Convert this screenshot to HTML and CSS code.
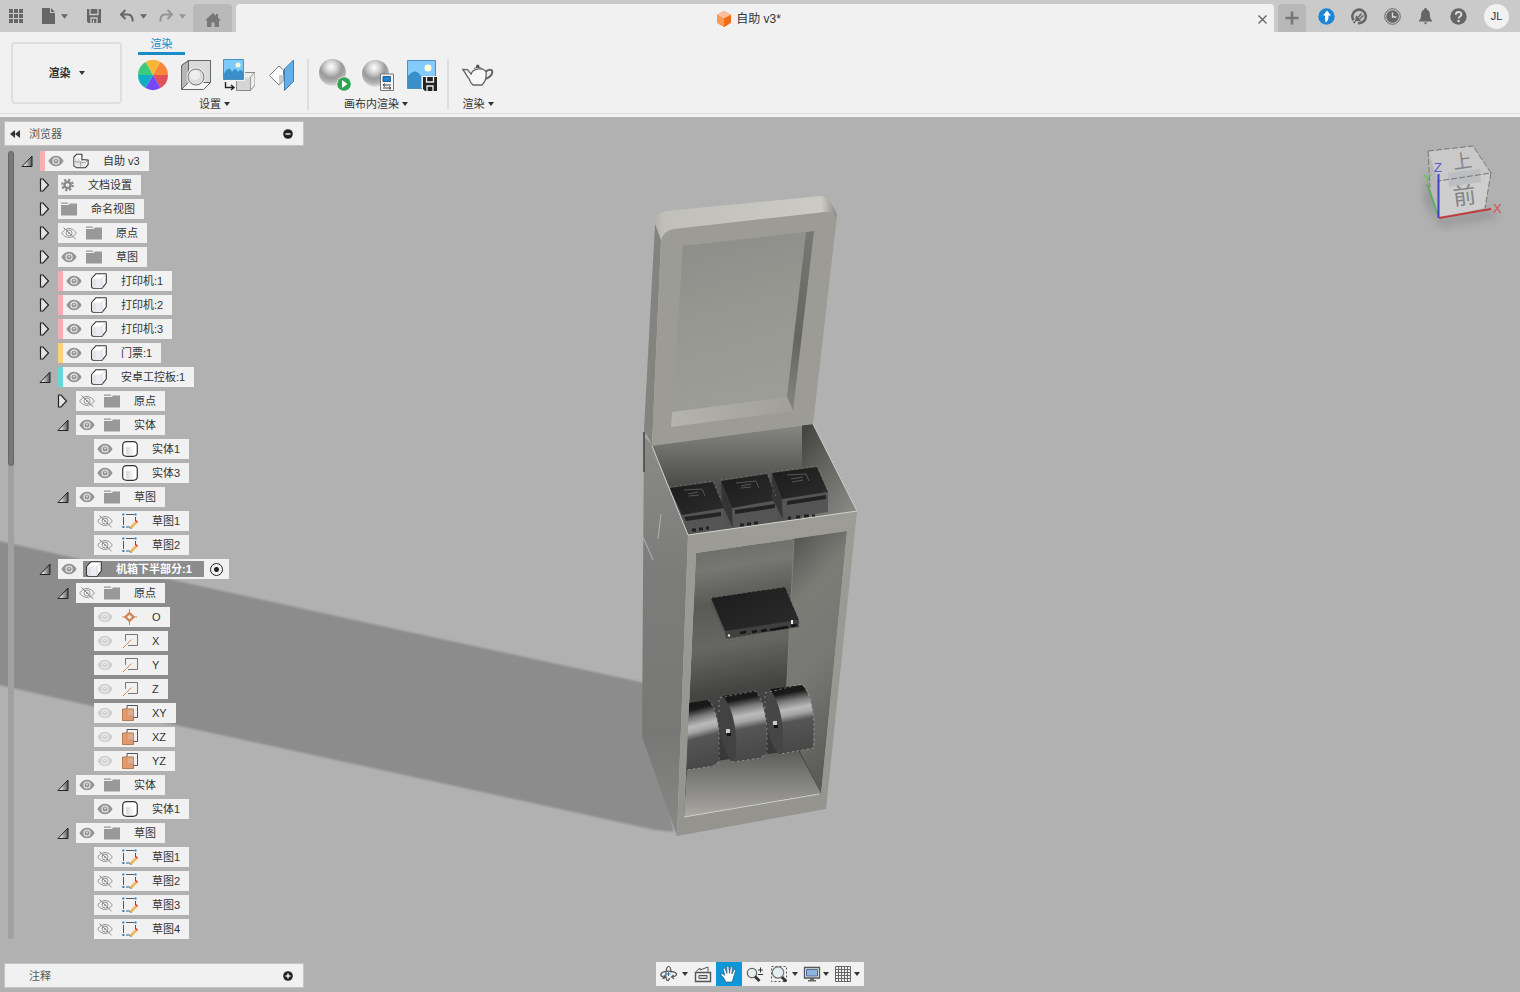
FILE: index.html
```html
<!DOCTYPE html>
<html lang="zh-CN">
<head>
<meta charset="utf-8">
<meta name="viewport" content="width=device-width, initial-scale=1">
<title>自助 v3*</title>
<link rel="stylesheet" href="styles.css">
</head>
<body>
<svg class="defs" aria-hidden="true">
  <defs>
    <linearGradient id="g-tri" x1="0" y1="0" x2="1" y2="0"><stop offset="0.2" stop-color="#eee"/><stop offset="1" stop-color="#555"/></linearGradient>
    <linearGradient id="g-box" x1="0" y1="0" x2="1" y2="0"><stop offset="0" stop-color="#d5d7dd"/><stop offset="1" stop-color="#fff"/></linearGradient>
    <radialGradient id="g-ball" cx="0.45" cy="0.28" r="0.75"><stop offset="0" stop-color="#fff"/><stop offset="0.25" stop-color="#d8d8d8"/><stop offset="0.55" stop-color="#9a9a9a"/><stop offset="0.75" stop-color="#b0b0b0"/><stop offset="1" stop-color="#e8e8e8"/></radialGradient>
  </defs>
  <symbol id="open" viewBox="0 0 12 14"><path d="M1 12.500H11V2z" fill="url(#g-tri)" stroke="#222"/></symbol>
  <symbol id="closed" viewBox="0 0 12 14"><path d="M1.500 1H4l5.500 6L4 13H1.500z" fill="#e4e4e4" stroke="#222" stroke-width="1.200"/></symbol>
  <symbol id="eye" viewBox="0 0 16 16"><path d="M.4 8C4 1 12 1 15.600 8 12 15 4 15 .4 8z" fill="#949494"/><circle cx="8" cy="8" r="3.600" fill="#f1f1f1"/><circle cx="8" cy="8" r="2.500" fill="#949494"/><circle cx="8" cy="7.600" r="1" fill="#ddd"/></symbol>
  <symbol id="eyeoff" viewBox="0 0 16 16"><path d="M.7 8C4.500 2 11.500 2 15.300 8 11.500 14 4.500 14 .7 8z" fill="none" stroke="#999"/><circle cx="8" cy="8" r="3" fill="none" stroke="#999"/><circle cx="8" cy="8" r="1" fill="#999"/><path d="M2.500 2.500l12 11.500" stroke="#888"/></symbol>
  <symbol id="folder" viewBox="0 0 16 16"><path d="M0 1.500h6.500l1 1.200H0zM0 4h7.500L9 2.500h7v12H0z" fill="#999"/></symbol>
  <symbol id="gear" viewBox="0 0 14 14"><circle cx="7" cy="7" r="5.600" fill="none" stroke="#888" stroke-width="2.400" stroke-dasharray="2.300 2.100"/><circle cx="7" cy="7" r="3.300" fill="none" stroke="#888" stroke-width="2.600"/></symbol>
  <symbol id="comp" viewBox="0 0 16 16"><path d="M.6 5.500L5 .7h10.300V10L11 15.300H2L.6 14z" fill="#fff" stroke="#333" stroke-width="1.100" stroke-linejoin="round"/><path d="M1.300 5.700h9.500v9H2.300l-1-1z" fill="#e2e4e9"/><path d="M5 5.700h5.800v9H5z" fill="#eceef1"/><path d="M11 15V5.600L15 1" fill="none" stroke="#ccc" stroke-width=".8"/></symbol>
  <symbol id="asm" viewBox="0 0 18 17"><path d="M1 4L4 1h6v6h3l4 .5v5L14 16H4l-3-2z" fill="#fff" stroke="#333" stroke-width="1.200" stroke-linejoin="round"/><path d="M1.600 5H8v10H4l-2.400-1.500zM9 10h5v5H9z" fill="#e3e4e8"/><path d="M8.500 10v6M1 9.500h7.500L11 7M8.500 10H14l3-2.500" fill="none" stroke="#888" stroke-width=".8"/></symbol>
  <symbol id="body" viewBox="0 0 16 16"><path d="M.7 4.500C.7 2 2 .7 5 .7h6c3 0 4.300 1.300 4.300 3.800v7c0 2.500-1.300 3.800-4.300 3.800H5c-3 0-4.300-1.300-4.300-3.800z" fill="#fff" stroke="#333" stroke-width="1.200"/><path d="M4 5.500c2 .8 6 .8 8.500 0v7.700c-2 1-6.500 1-8.500 0z" fill="url(#g-box)"/></symbol>
  <symbol id="sketch" viewBox="0 0 16 16"><path d="M4 1.500h8M1.500 4v8M13.500 4v4M4 14h4" stroke="#555" fill="none"/><path d="M.4.500h2v2h-2zM12.500.500h2v2h-2zM.4 13h2v2h-2z" fill="#1c86c7"/><path d="M8 15.500l1-3 4.500-4.500 2 2L11 14.500z" fill="#f6b955"/><path d="M13 8.300L14.500 7 16 8.500l-1 1.600z" fill="#d9534f"/><path d="M8 15.800l.6-1.800 1.400 1.200z" fill="#555"/></symbol>
  <symbol id="origin" viewBox="0 0 16 16"><path d="M7.500 0v16M0 8h15" stroke="#cf8d5f"/><path d="M7.500 4L11.500 8l-4 4-4-4z" fill="#f5e9e0" stroke="#cf8352" stroke-width="2.200"/></symbol>
  <symbol id="axis" viewBox="0 0 16 16"><path d="M3.500 8V1.500h12v11H6" fill="none" stroke="#777"/><path d="M1 15l8.500-8.500" stroke="#d78a5c"/></symbol>
  <symbol id="plane" viewBox="0 0 16 16"><path d="M5 4V.5h10.500v12H12" fill="none" stroke="#555"/><path d="M.5 4h11v11.500H.5z" fill="#e29a6c" stroke="#b9774e"/><path d="M5 4.500h6.500V11H5z" fill="#e2ab8c" stroke="#bd8a6b" stroke-width=".6"/></symbol>
  <symbol id="caret" viewBox="0 0 6 4"><path d="M0 0h6L3 4z" fill="currentColor"/></symbol>
  <symbol id="save" viewBox="0 0 14 14"><path d="M0 0h14v14H1.500L0 12.500z" fill="currentColor"/><path d="M3 0v5.500h8V0M4 14V9h6v5M6.500 14v-3" fill="none" stroke="#cacaca" stroke-width="1.300"/></symbol>
  <symbol id="undo" viewBox="0 0 14 14"><path d="M5.500 1L1 5.500 5.500 10M1.500 5.500H8c3 0 4.700 2 4.700 7" fill="none" stroke="currentColor" stroke-width="2"/></symbol>
</svg>

<header class="topbar">
  <div class="quick">
    <button class="q" aria-label="数据面板"><svg width="14" height="14" viewBox="0 0 14 14"><path d="M0 0h4v4H0zM5 0h4v4H5zM10 0h4v4h-4zM0 5h4v4H0zM5 5h4v4H5zM10 5h4v4h-4zM0 10h4v4H0zM5 10h4v4H5zM10 10h4v4h-4z" fill="#666"/></svg></button>
    <button class="q file" aria-label="文件"><svg width="13" height="16" viewBox="0 0 13 16"><path d="M0 0h8v5h5v11H0zM9 0l4 4H9z" fill="#666"/></svg><svg class="car"><use href="#caret"/></svg></button>
    <button class="q" aria-label="保存"><svg width="14" height="14"><use href="#save"/></svg></button>
    <button class="q undo" aria-label="撤消"><svg width="14" height="14"><use href="#undo"/></svg><svg class="car"><use href="#caret"/></svg></button>
    <button class="q redo" aria-label="重做"><svg width="14" height="14" viewBox="0 0 14 14"><path d="M8.500 1L13 5.500 8.500 10M12.500 5.500H6c-3 0-4.700 2-4.700 7" fill="none" stroke="currentColor" stroke-width="2"/></svg><svg class="car"><use href="#caret"/></svg></button>
  </div>
  <button class="home" aria-label="主页"><svg width="16" height="14" viewBox="0 0 16 14"><path d="M8 0l3 2.700V1h2v3.500L16 7.500h-2V14H9.500V9.500h-3V14H2V7.500H0z" fill="#777"/></svg></button>
  <div class="doc">
    <span class="title"><svg width="14" height="16" viewBox="0 0 14 16"><path d="M7 0l7 3.700v8.100L7 16l-7-4.200V3.700z" fill="#f4863a"/><path d="M7 0l7 3.700-7 3.800L0 3.700z" fill="#fbc09a"/><path d="M7 7.500l7-3.800v8.100L7 16z" fill="#f36b12"/><path d="M0 3.700l7 3.800V16l-7-4.200z" fill="#fa9a58"/></svg>自助 v3*</span>
    <button class="close" aria-label="关闭"><svg width="9" height="9" viewBox="0 0 9 9"><path d="M.5.500l8 8M8.500.500l-8 8" stroke="#666" stroke-width="1.400"/></svg></button>
  </div>
  <button class="plus" aria-label="新建"><svg width="14" height="14" viewBox="0 0 14 14"><path d="M7 .5v13M.5 7h13" stroke="#777" stroke-width="2.600"/></svg></button>
  <div class="status">
    <button aria-label="更新"><svg width="17" height="17" viewBox="0 0 17 17"><circle cx="8.500" cy="8.500" r="8.200" fill="#1f86d4"/><path d="M9 2.500l4 5h-2.500c.2 3-.5 5-2.500 7-1-1-1-4-.8-7H5z" fill="#fff"/></svg></button>
    <button aria-label="扩展"><svg width="17" height="17" viewBox="0 0 17 17"><path d="M2.600 12.200A6.700 6.700 0 1 1 7 15" fill="none" stroke="#666" stroke-width="2.600"/><path d="M5.500 7.500l4.500 4.500c-1.500 1.500-3.500 1.500-4.800.5-1.300-1.500-1.200-3.500.3-5z" fill="#666"/><path d="M2.500 15l3-3M7.500 9l3-3.500M9 10.500l3.500-3" stroke="#666" stroke-width="1.600"/></svg></button>
    <button aria-label="作业状态"><svg width="17" height="17" viewBox="0 0 17 17"><circle cx="8.500" cy="8.500" r="7.800" fill="none" stroke="#666"/><circle cx="8.500" cy="8.500" r="6.300" fill="#666"/><path d="M8.500 4.500V9h4" fill="none" stroke="#ddd" stroke-width="1.400"/></svg></button>
    <button aria-label="通知"><svg width="17" height="17" viewBox="0 0 17 17"><path d="M8.500 0c1 0 1.300.7 1.300 1.600C12.500 2.500 13 5 13 8c0 2.500 1 3.500 2 4.500v1H2v-1C3 11.500 4 10.500 4 8c0-3 .5-5.500 3.200-6.400C7.200.700 7.500 0 8.500 0zM6.500 14.500h4L8.500 16.500z" fill="#666"/></svg></button>
    <button aria-label="帮助"><svg width="17" height="17" viewBox="0 0 17 17"><circle cx="8.500" cy="8.500" r="8.200" fill="#666"/><path d="M5.800 6.800c0-3.800 5.600-3.600 5.600-.4 0 2-2.800 2-2.800 4.200" fill="none" stroke="#ddd" stroke-width="1.900"/><circle cx="8.600" cy="13" r="1.200" fill="#ddd"/></svg></button>
    <button class="avatar" aria-label="账户 JL">JL</button>
  </div>
</header>

<section class="ribbon">
  <button class="workspace">渲染<svg class="car"><use href="#caret"/></svg></button>
  <div class="tools">
    <nav class="tabs"><a href="#render">渲染</a></nav>
    <div class="groups">
      <div class="group">
        <div class="icons">
          <button aria-label="外观"><svg width="32" height="32" viewBox="0 0 32 32"><path d="M16 16L8.500 3A15 15 0 0 1 23.500 3z" fill="#f7b638"/><path d="M16 16L23.500 3A15 15 0 0 1 31 16z" fill="#fb8539"/><path d="M16 16h15a15 15 0 0 1-7.500 13z" fill="#e0525a"/><path d="M16 16l7.500 13a15 15 0 0 1-15 0z" fill="#7547f5"/><path d="M16 16L8.500 29A15 15 0 0 1 1 16z" fill="#10aec6"/><path d="M16 16H1A15 15 0 0 1 8.500 3z" fill="#3bcb7b"/></svg></button>
          <button aria-label="场景设置"><svg width="32" height="32" viewBox="0 0 32 32"><path d="M1.500 6.500L8.500 1.500h22v22l-7 7h-22z" fill="#f5f5f5" stroke="#666"/><path d="M8.500 1.500h22v22h-22z" fill="#dadada" stroke="#666"/><path d="M1.500 6.500l7-5v22l-7 7z" fill="#b5b5b5" stroke="#666"/><circle cx="16" cy="18" r="9.500" fill="#eee"/><circle cx="16" cy="18" r="8" fill="#ddd" stroke="#777"/><circle cx="15" cy="16" r="5" fill="#eee"/></svg></button>
          <button aria-label="贴图"><svg width="32" height="32" viewBox="0 0 32 32"><path d="M13.500 18l4-4.500H32V26l-4.500 5.500h-14z" fill="#eee" stroke="#888"/><path d="M14 18.500h13V31H14z" fill="#d5d5d5"/><path d="M27.500 31V18l4-4.500" fill="none" stroke="#999"/><path d="M0 0h22v22H0z" fill="#f1f1f1"/><path d="M.5.500h20v20H.5z" fill="#7ecbfb" stroke="#4b91bd"/><path d="M1 15c3-6 6-7 8-2 2-4 4-4 6 0 2-3 3-3 5 0v7H1z" fill="#3a8fca"/><circle cx="15" cy="6" r="2.500" fill="#fff6cf"/><path d="M2.500 23v5.500h8M8 26l3 2.500L8 31" fill="none" stroke="#222" stroke-width="1.400"/></svg></button>
          <button aria-label="纹理贴图控制"><svg width="32" height="32" viewBox="0 0 32 32"><path d="M3.500 16.500L13 7l4.500 4v11L13 26z" fill="#fff" stroke="#777"/><path d="M13 16h4.500v5.500L13 26z" fill="#ccc"/><path d="M18.500 10L27.500 1v21.500l-9 9z" fill="#65aee6" stroke="#467da8"/></svg></button>
        </div>
        <button class="menu">设置<svg class="car"><use href="#caret"/></svg></button>
      </div>
      <div class="group">
        <div class="icons">
          <button aria-label="画布内渲染"><svg width="34" height="32" viewBox="0 0 34 32"><circle cx="13.500" cy="13.500" r="13.500" fill="url(#g-ball)"/><circle cx="25" cy="25" r="7.500" fill="#f1f1f1"/><circle cx="25" cy="25" r="6.800" fill="#2fa554"/><path d="M23 21l5.500 4-5.500 4z" fill="#fff"/></svg></button>
          <button aria-label="画布内渲染设置"><svg width="34" height="32" viewBox="0 0 34 32"><circle cx="13.500" cy="14.500" r="13.500" fill="url(#g-ball)"/><path d="M18.500 15h13v16.500h-13z" fill="#f6f6f6" stroke="#777"/><path d="M21 17.500h7.500v5H21z" fill="#2084d0" stroke="#225f91"/><path d="M21 26h8M21 29h8M23 24.500L21 26l2 1.500M27 27.500l2 1.500-2 1.500" stroke="#444" fill="none"/></svg></button>
          <button aria-label="捕获图像"><svg width="32" height="32" viewBox="0 0 32 32"><path d="M1.500 1.500h28v28h-28z" fill="#84cafb" stroke="#4b8fbd"/><path d="M2 17c5-6 9-6 13 0v12H2z" fill="#3b8fc9"/><circle cx="22" cy="9" r="3.500" fill="#fbffd9"/><path d="M16 17h16v15H16z" fill="#f1f1f1"/><g transform="translate(17 18)"><path d="M0 0h14v14H2l-2-2z" fill="#222"/><path d="M3.500 0v5h7V0M4 14V9h6v5" fill="none" stroke="#eee" stroke-width="1.300"/></g></svg></button>
        </div>
        <button class="menu">画布内渲染<svg class="car"><use href="#caret"/></svg></button>
      </div>
      <div class="group">
        <div class="icons">
          <button aria-label="渲染"><svg width="32" height="32" viewBox="0 0 32 32"><path d="M.8 10.500l4.700.2 3.500 4.500C11 9 22 8 24 13c.8 5.500-1 10-4 13H11c-2-2-3.500-4-3.700-6C5 18 4 14.500.8 10.500z" fill="#f7f7f7" stroke="#666" stroke-width="1.300"/><path d="M23.800 13c2-3 6.500-3 6.500 0s-3.500 6-7 7" fill="none" stroke="#666" stroke-width="2"/><path d="M12 9.500c2-1.500 6-1.500 8 0" stroke="#666" fill="none"/><circle cx="15.700" cy="7.300" r="1.700" fill="#555"/></svg></button>
        </div>
        <button class="menu">渲染<svg class="car"><use href="#caret"/></svg></button>
      </div>
    </div>
  </div>
</section>

<main class="viewport">
  <svg class="scene" viewBox="0 117 1520 875" preserveAspectRatio="xMidYMid slice" role="img" aria-label="自助终端模型">
    <defs>
      <filter id="soft" x="-5%" y="-5%" width="110%" height="110%"><feGaussianBlur stdDeviation="1.200"/></filter>
      <filter id="blur"><feGaussianBlur stdDeviation="5"/></filter>
      <linearGradient id="lidtop" x1="0" y1="0" x2="1" y2="0"><stop offset="0" stop-color="#a5a49e"/><stop offset=".1" stop-color="#c0bfb9"/><stop offset=".92" stop-color="#cbcac4"/><stop offset="1" stop-color="#8b8a86"/></linearGradient>
      <linearGradient id="screen" x1="0" y1="0" x2=".2" y2="1"><stop offset="0" stop-color="#8b8c89"/><stop offset=".5" stop-color="#979791"/><stop offset="1" stop-color="#9d9d98"/></linearGradient>
      <linearGradient id="rim" x1="0" y1="0" x2="0" y2="1"><stop offset="0" stop-color="#777773"/><stop offset=".6" stop-color="#656562"/><stop offset="1" stop-color="#858580"/></linearGradient>
      <linearGradient id="ledge" x1="0" y1="0" x2="1" y2="0"><stop offset="0" stop-color="#b4b3ad"/><stop offset="1" stop-color="#a09f9a"/></linearGradient>
      <linearGradient id="side" x1="0" y1="0" x2="0" y2="1"><stop offset="0" stop-color="#8b8b88"/><stop offset=".35" stop-color="#7c7c7a"/><stop offset=".75" stop-color="#777775"/><stop offset="1" stop-color="#898986"/></linearGradient>
      <linearGradient id="backtop" x1="0" y1="0" x2="0" y2="1"><stop offset="0" stop-color="#888884"/><stop offset=".25" stop-color="#6c6c69"/><stop offset=".55" stop-color="#4c4c4a"/><stop offset="1" stop-color="#555"/></linearGradient>
      <linearGradient id="walltop" x1="0" y1="0" x2=".8" y2="1"><stop offset="0" stop-color="#40403e"/><stop offset=".5" stop-color="#666662"/><stop offset="1" stop-color="#888884"/></linearGradient>
      <linearGradient id="back" x1="0" y1="0" x2=".1" y2="1"><stop offset="0" stop-color="#666662"/><stop offset=".15" stop-color="#767672"/><stop offset=".27" stop-color="#5a5a57"/><stop offset=".42" stop-color="#666663"/><stop offset=".58" stop-color="#444442"/><stop offset="1" stop-color="#2d2d2c"/></linearGradient>
      <linearGradient id="wall" x1="0" y1="0" x2=".25" y2="1"><stop offset="0" stop-color="#4c4c49"/><stop offset=".3" stop-color="#7c7c77"/><stop offset=".6" stop-color="#777773"/><stop offset="1" stop-color="#5c5c59"/></linearGradient>
      <linearGradient id="floor" x1="0" y1="0" x2="0" y2="1"><stop offset="0" stop-color="#5b5b58"/><stop offset=".5" stop-color="#83837f"/><stop offset="1" stop-color="#aaa9a4"/></linearGradient>
      <linearGradient id="roll" x1="0" y1="0" x2=".12" y2="1"><stop offset="0" stop-color="#151515"/><stop offset=".16" stop-color="#1a1a1a"/><stop offset=".28" stop-color="#7c7c7c"/><stop offset=".4" stop-color="#bbb"/><stop offset=".48" stop-color="#a5a5a5"/><stop offset=".58" stop-color="#555"/><stop offset="1" stop-color="#484848"/></linearGradient>
      <linearGradient id="frame" x1="0" y1="0" x2="0" y2="1"><stop offset="0" stop-color="#9d9c96"/><stop offset="1" stop-color="#94938d"/></linearGradient>
      <linearGradient id="dark" x1="0" y1="0" x2="1" y2="1"><stop offset="0" stop-color="#1b1b1b"/><stop offset="1" stop-color="#2c2c2c"/></linearGradient>
    </defs>
    <path d="M-10 539L150 575 400 630 645 683 674 832 655 830 400 774 180 726-10 683z" fill="#8c8c8c" filter="url(#soft)"/>

    <path d="M644 428L652 443 688 535 677 836 642 737z" fill="url(#side)"/>
    <path d="M652 445L813 424 857 511 688 535z" fill="url(#backtop)"/>
    <path d="M802 425L813 424 857 511 802 519z" fill="url(#walltop)"/>
    <g>
      <path d="M682 515L724 508V528L690 534z" fill="#555"/><path d="M670 488L713 482 724 508 682 515z" fill="url(#dark)"/><path d="M684 517L721 512V516L686 521z" fill="#242424"/>
      <path d="M721 481L732 508 733 528 722 505z" fill="#353535"/><path d="M732 508L777 500V521L733 528z" fill="#555"/><path d="M721 481L767 474 777 500 732 508z" fill="url(#dark)"/><path d="M735 510L775 504V508L735 514z" fill="#222"/>
      <path d="M772 473L782 499 783 519 772 498z" fill="#353535"/><path d="M782 499L828 492V512L783 519z" fill="#555"/><path d="M772 473L817 467 828 492 782 499z" fill="url(#dark)"/><path d="M787 501L826 495V499L787 505z" fill="#222"/>
      <path d="M692 530h4m3-1h4m3-1h3M740 525h4m3-1h4m3-1h4M788 518h3m5-1h4m4-1h5m3 0h3" stroke="#202020" stroke-width="3"/>
      <path d="M684 490l18-1 3 7M736 483l20-2 3 7M787 475l19-1 3 7M688 494l10-2M689 496l10-1M741 486l10-2M741 488l10-1M791 479l12-2M792 482l11-2" stroke="#555" stroke-width="1" fill="none"/>
      <path d="M670 487L713 481 720 497M721 480L767 473 777 499M772 472L817 466 828 491" fill="none" stroke="#aaa" stroke-width=".6" stroke-dasharray="1 4"/>
    </g>

    <path d="M696 553L847 531 821 793 684 817z" fill="url(#back)"/>
    <path d="M687 765L798 750 821 793 684 817z" fill="url(#floor)"/>
    <path d="M794 538L847 531 821 793 800 752 786 700z" fill="url(#wall)"/>
    <path d="M794 540L786 700" stroke="#858581" stroke-width=".8"/>
    <path d="M711 598L725 631 727 639 711 605z" fill="#555"/>
    <path d="M725 630L799 620V627L726 639z" fill="#404040"/>
    <path d="M711 598L785 587 799 620 725 631z" fill="url(#dark)"/>
    <path d="M711 598L785 587 799 620V627L726 639" fill="none" stroke="#999" stroke-width=".6" stroke-dasharray="1 4"/>
    <path d="M740 633l6-1M752 632l5-1M761 631l6-1M770 630l18-3M791 626l6-1" stroke="#151515" stroke-width="2.500"/>
    <path d="M792 620v4M728 635l2 1" stroke="#eee" stroke-width="2"/>

    <g>
      <path d="M689 703L708 700C714 705 719 723 719 735L718 762 713 766 686 770z" fill="url(#roll)"/>
      <path d="M723 696L755 691C763 698 767 720 767 735L766 753 760 758 733 762C737 740 734 711 723 696z" fill="url(#roll)"/>
      <path d="M722 696C733 705 739 736 735 761L731 761C725 752 719 738 719 714z" fill="#424242"/>
      <path d="M770 689L802 685C810 692 814 713 814 728L813 748 780 754C785 733 781 704 770 689z" fill="url(#roll)"/>
      <path d="M768 690C780 698 786 730 782 754L779 754C772 747 766 732 765 708z" fill="#464646"/>
      <path d="M726 729h4v4h-4zM773 721h4v4h-4z" fill="#ccc"/>
      <path d="M727 733h4v3h-4zM774 725h4v3h-4z" fill="#111"/>
      <path d="M719 712V698L755 691C764 698 767 720 767 735V753L760 758 733 762M765 708V693L802 684C811 692 814 713 814 728V748L780 754M708 700C715 705 719 723 719 735V762L713 766 687 770" fill="none" stroke="#bbb" stroke-width=".6" stroke-dasharray="2 3"/>
    </g>

    <path fill-rule="evenodd" d="M688 535L857 511 826 809 677 836zM696 553L684 817 821 793 847 531z" fill="url(#frame)"/>
    <path d="M684 817L819 794M688 535L857 511 813 424M652 446L688 535" fill="none" stroke="#d2d2cd" stroke-width="1"/>
    <path d="M661 514l-3 25M643 537l10 23" stroke="#aaa" stroke-width="1.200"/>
    <path d="M644 432v40" stroke="#444" stroke-width="1.500"/>

    <path d="M655 224Q656 212 667 211L820 196Q830 196 837 215L834 235 662 250 652 444 645 438z" fill="url(#lidtop)"/>
    <path d="M655 224L661 240 652 444 644 430z" fill="#838380"/>
    <path d="M661 242Q662 231 674 229L825 212Q838 211 836 224L813 424 652 446z" fill="#9c9b95"/>
    <path d="M683 246L806 232 787 397 672 412z" fill="url(#screen)"/>
    <path d="M806 232L814 231 793 411 787 397z" fill="url(#rim)"/>
    <path d="M672 412L787 397 793 411 671 427z" fill="url(#ledge)"/>

    <g>
      <path d="M1428 170L1439 220 1490 211 1500 216 1440 226 1425 200z" fill="#777" opacity=".6" filter="url(#blur)"/>
      <path d="M1428 151L1473 146 1491 173 1438 181z" fill="#c9c9c9"/>
      <path d="M1438 181L1491 173 1485 208 1439 218z" fill="#cecece"/>
      <path d="M1428 151L1438 181 1439 218 1430 187z" fill="#b8b8b8"/>
      <path d="M1448 173L1480 169 1481 182 1449 187z" fill="#bcbfc2"/>
      <path d="M1428 151L1473 146 1491 173 1438 181M1491 173L1485 208M1428 151L1430 187" fill="none" stroke="#777" stroke-width="1" stroke-dasharray="6 2"/>
      <text class="face" x="1453" y="168" transform="rotate(-8 1462 161)">上</text>
      <text class="face front" x="1453" y="204" transform="rotate(-7 1464 197)">前</text>
      <path d="M1439 218L1427 184" stroke="#4cb350" stroke-width="1.500"/>
      <path d="M1438.500 218V174" stroke="#4040c4" stroke-width="2"/>
      <path d="M1439 218L1491 209" stroke="#c13e3e" stroke-width="2"/>
      <text class="ax z" x="1434" y="172">Z</text><text class="ax x" x="1493" y="213">X</text><text class="ax y" x="1423" y="183">Y</text>
    </g>
  </svg>

  <aside class="browser">
    <div class="bar">
      <button class="fold" aria-label="折叠"><svg width="10" height="8" viewBox="0 0 10 8"><path d="M5 0v8L0 4zM10 0v8L5 4z" fill="#333"/></svg></button>
      <span>浏览器</span>
      <button aria-label="最小化"><svg width="10" height="10" viewBox="0 0 10 10"><circle cx="5" cy="5" r="4.800" fill="#222"/><path d="M2.500 5h5" stroke="#eee" stroke-width="1.500"/></svg></button>
    </div>
    <div class="treewrap">
      <div class="track"><div class="thumb"></div></div>
      <ul class="tree">
        <li class="l0"><button class="tg"><svg><use href="#open"/></svg></button><div class="node pink"><button><svg><use href="#eye"/></svg></button><svg><use href="#asm"/></svg><span>自助 v3</span></div></li>
        <li class="l1"><button class="tg"><svg><use href="#closed"/></svg></button><div class="node"><svg class="gear"><use href="#gear"/></svg><span>文档设置</span></div></li>
        <li class="l1"><button class="tg"><svg><use href="#closed"/></svg></button><div class="node"><svg><use href="#folder"/></svg><span>命名视图</span></div></li>
        <li class="l1"><button class="tg"><svg><use href="#closed"/></svg></button><div class="node"><button><svg><use href="#eyeoff"/></svg></button><svg><use href="#folder"/></svg><span>原点</span></div></li>
        <li class="l1"><button class="tg"><svg><use href="#closed"/></svg></button><div class="node"><button><svg><use href="#eye"/></svg></button><svg><use href="#folder"/></svg><span>草图</span></div></li>
        <li class="l1"><button class="tg"><svg><use href="#closed"/></svg></button><div class="node pink"><button><svg><use href="#eye"/></svg></button><svg><use href="#comp"/></svg><span>打印机:1</span></div></li>
        <li class="l1"><button class="tg"><svg><use href="#closed"/></svg></button><div class="node pink"><button><svg><use href="#eye"/></svg></button><svg><use href="#comp"/></svg><span>打印机:2</span></div></li>
        <li class="l1"><button class="tg"><svg><use href="#closed"/></svg></button><div class="node pink"><button><svg><use href="#eye"/></svg></button><svg><use href="#comp"/></svg><span>打印机:3</span></div></li>
        <li class="l1"><button class="tg"><svg><use href="#closed"/></svg></button><div class="node yellow"><button><svg><use href="#eye"/></svg></button><svg><use href="#comp"/></svg><span>门票:1</span></div></li>
        <li class="l1"><button class="tg"><svg><use href="#open"/></svg></button><div class="node cyan"><button><svg><use href="#eye"/></svg></button><svg><use href="#comp"/></svg><span>安卓工控板:1</span></div></li>
        <li class="l2"><button class="tg"><svg><use href="#closed"/></svg></button><div class="node"><button><svg><use href="#eyeoff"/></svg></button><svg><use href="#folder"/></svg><span>原点</span></div></li>
        <li class="l2"><button class="tg"><svg><use href="#open"/></svg></button><div class="node"><button><svg><use href="#eye"/></svg></button><svg><use href="#folder"/></svg><span>实体</span></div></li>
        <li class="l3"><div class="node"><button><svg><use href="#eye"/></svg></button><svg><use href="#body"/></svg><span>实体1</span></div></li>
        <li class="l3"><div class="node"><button><svg><use href="#eye"/></svg></button><svg><use href="#body"/></svg><span>实体3</span></div></li>
        <li class="l2"><button class="tg"><svg><use href="#open"/></svg></button><div class="node"><button><svg><use href="#eye"/></svg></button><svg><use href="#folder"/></svg><span>草图</span></div></li>
        <li class="l3"><div class="node"><button><svg><use href="#eyeoff"/></svg></button><svg><use href="#sketch"/></svg><span>草图1</span></div></li>
        <li class="l3"><div class="node"><button><svg><use href="#eyeoff"/></svg></button><svg><use href="#sketch"/></svg><span>草图2</span></div></li>
        <li class="l1"><button class="tg"><svg><use href="#open"/></svg></button><div class="node active"><button><svg><use href="#eye"/></svg></button><div class="sel"><svg><use href="#comp"/></svg><span>机箱下半部分:1</span></div><input type="radio" name="activate" aria-label="激活 机箱下半部分:1" checked></div></li>
        <li class="l2"><button class="tg"><svg><use href="#open"/></svg></button><div class="node"><button><svg><use href="#eyeoff"/></svg></button><svg><use href="#folder"/></svg><span>原点</span></div></li>
        <li class="l3"><div class="node dim"><button><svg><use href="#eye"/></svg></button><svg><use href="#origin"/></svg><span>O</span></div></li>
        <li class="l3"><div class="node dim"><button><svg><use href="#eye"/></svg></button><svg><use href="#axis"/></svg><span>X</span></div></li>
        <li class="l3"><div class="node dim"><button><svg><use href="#eye"/></svg></button><svg><use href="#axis"/></svg><span>Y</span></div></li>
        <li class="l3"><div class="node dim"><button><svg><use href="#eye"/></svg></button><svg><use href="#axis"/></svg><span>Z</span></div></li>
        <li class="l3"><div class="node dim"><button><svg><use href="#eye"/></svg></button><svg><use href="#plane"/></svg><span>XY</span></div></li>
        <li class="l3"><div class="node dim"><button><svg><use href="#eye"/></svg></button><svg><use href="#plane"/></svg><span>XZ</span></div></li>
        <li class="l3"><div class="node dim"><button><svg><use href="#eye"/></svg></button><svg><use href="#plane"/></svg><span>YZ</span></div></li>
        <li class="l2"><button class="tg"><svg><use href="#open"/></svg></button><div class="node"><button><svg><use href="#eye"/></svg></button><svg><use href="#folder"/></svg><span>实体</span></div></li>
        <li class="l3"><div class="node"><button><svg><use href="#eye"/></svg></button><svg><use href="#body"/></svg><span>实体1</span></div></li>
        <li class="l2"><button class="tg"><svg><use href="#open"/></svg></button><div class="node"><button><svg><use href="#eye"/></svg></button><svg><use href="#folder"/></svg><span>草图</span></div></li>
        <li class="l3"><div class="node"><button><svg><use href="#eyeoff"/></svg></button><svg><use href="#sketch"/></svg><span>草图1</span></div></li>
        <li class="l3"><div class="node"><button><svg><use href="#eyeoff"/></svg></button><svg><use href="#sketch"/></svg><span>草图2</span></div></li>
        <li class="l3"><div class="node"><button><svg><use href="#eyeoff"/></svg></button><svg><use href="#sketch"/></svg><span>草图3</span></div></li>
        <li class="l3"><div class="node"><button><svg><use href="#eyeoff"/></svg></button><svg><use href="#sketch"/></svg><span>草图4</span></div></li>
      </ul>
    </div>
    <div class="bar comments">
      <span>注释</span>
      <button aria-label="展开注释"><svg width="10" height="10" viewBox="0 0 10 10"><circle cx="5" cy="5" r="4.800" fill="#222"/><path d="M2.500 5h5M5 2.500v5" stroke="#eee" stroke-width="1.500"/></svg></button>
    </div>
  </aside>

  <div class="navbar">
    <button class="drop" aria-label="动态观察"><svg width="18" height="18" viewBox="0 0 18 18"><path d="M9.500 13C8.500 17 6.500 16.500 6 12 5.500 7 6.500 1.500 8.500 1.500c1.500 0 2.500 3 2.500 6M4.500 12.500C-1 11 0 7.500 5 6.500c5-.8 11 .2 11.500 2.500.2 1.500-1.500 2.500-4.500 3M2.500 13.800l2.500-1.200-1-2.600M13.500 9.800L11.500 12l2.500 1.700" fill="none" stroke="#555" stroke-width="1.200"/><path d="M8.500 7v4M6.500 9h4" stroke="#2c77ad"/></svg><svg class="car"><use href="#caret"/></svg></button>
    <button aria-label="观察方向"><svg width="18" height="18" viewBox="0 0 18 18"><path d="M1.500 7.500h15v9h-15z" fill="#eee" stroke="#555" stroke-width="1.400"/><path d="M5 10.500h8v3H5z" fill="#ccc" stroke="#555"/><path d="M2 6.500l4-3.500v2l8-3v4.500" fill="none" stroke="#555"/></svg></button>
    <button class="on" aria-label="平移"><svg width="18" height="18" viewBox="0 0 18 18"><path d="M5.500 17C5 14 3.500 12.500.800 9.800c0-1.500 1.700-1.400 4 .6L3.300 4.200c0-1.500 1.600-1.600 2 0L7 8.500 6.800 2c0-1.500 1.900-1.500 2 0l.6 6.300 1.100-5.700c.4-1.300 2-1 1.900.400l-.600 6 2-4c.7-1.200 2-.5 1.700.7L13.600 12c-.3 2-1 3-1.600 5z" fill="#fff" stroke="#264b63" stroke-width=".6"/></svg></button>
    <button aria-label="缩放"><svg width="18" height="18" viewBox="0 0 18 18"><circle cx="6" cy="8" r="4.700" fill="#e2eef0" stroke="#666" stroke-width="1.200"/><path d="M9 11.500l4.500 4.500" stroke="#333" stroke-width="2.800"/><path d="M12 5h5M14.500 2.500v5M12 9.500h5" stroke="#333"/></svg></button>
    <button class="drop" aria-label="窗口缩放"><svg width="18" height="18" viewBox="0 0 18 18"><path d="M1.500 1.500h15v15h-15z" fill="none" stroke="#555" stroke-dasharray="2 2"/><circle cx="8" cy="7.500" r="5.700" fill="#e2eff0" stroke="#777" stroke-width="1.200"/><path d="M12 12l4 4.500" stroke="#333" stroke-width="2.800"/></svg><svg class="car"><use href="#caret"/></svg></button>
    <button class="drop tight" aria-label="显示设置"><svg width="18" height="18" viewBox="0 0 18 18"><path d="M1.500 2.500h15v10.500h-15z" fill="#eee" stroke="#555" stroke-width="1.300"/><path d="M3.500 4.500h11v6.500h-11z" fill="#8fb3dd" stroke="#4a6f9b"/><path d="M7 13h4v2h2v1.500H5V15h2z" fill="#666"/></svg><svg class="car"><use href="#caret"/></svg></button>
    <button class="drop tight" aria-label="栅格和捕捉"><svg width="18" height="18" viewBox="0 0 18 18"><path d="M1.500 1.500h15v15h-15zM1.500 4.500h15m-15 3h15m-15 3h15m-15 3h15M4.500 1.500v15m3-15v15m3-15v15m3-15v15" fill="none" stroke="#666"/></svg><svg class="car"><use href="#caret"/></svg></button>
  </div>
</main>
</body>
</html>
```
FILE: styles.css
```css
* { box-sizing: border-box; }

body {
  margin: 0;
  min-height: 100vh;
  display: flex;
  flex-direction: column;
  font: 11px/16px "Liberation Sans", "Noto Sans CJK SC", sans-serif;
  color: #333;
  background: #b1b1b1;
}

button {
  display: flex;
  align-items: center;
  justify-content: center;
  margin: 0;
  padding: 0;
  border: 0;
  background: none;
  font: inherit;
  color: inherit;
}

svg { display: block; flex: none; }
.defs { position: absolute; width: 0; height: 0; }
.car { width: 6px; height: 4px; }

/* Title bar */
.topbar {
  display: flex;
  align-items: flex-end;
  height: 32px;
  background: #cacaca;
}
.quick {
  display: flex;
  align-items: center;
  width: 193px;
  height: 32px;
  padding-left: 9px;
  color: #666;
}
.quick .car { width: 7px; height: 5px; }
.q { gap: 6px; }
.q.file { margin: 0 19px; }
.q.undo { margin-left: 19px; }
.q.redo { margin-left: 12px; color: #959595; }
.home {
  width: 39px;
  height: 28px;
  margin-right: 4px;
  padding-top: 3px;
  background: #b9b9b9;
  border-radius: 4px 4px 0 0;
}
.doc {
  flex: 1;
  display: flex;
  align-items: center;
  height: 28px;
  padding: 2px 7px 0 4px;
  background: #f1f1f1;
  border-radius: 4px 4px 0 0;
}
.title {
  flex: 1;
  display: flex;
  align-items: center;
  justify-content: center;
  gap: 5px;
  font-size: 12px;
}
.plus {
  width: 28px;
  height: 28px;
  margin-left: 4px;
  background: #b8b8b8;
  border-radius: 4px 4px 0 0;
}
.status {
  display: flex;
  align-items: center;
  gap: 16px;
  height: 32px;
  padding: 0 11px 0 12px;
}
.avatar {
  width: 25px;
  height: 25px;
  margin-left: 1px;
  border-radius: 50%;
  background: #f1f1f1;
}

/* Ribbon */
.ribbon {
  display: flex;
  align-items: flex-start;
  gap: 15px;
  height: 85px;
  padding: 4px 0 0 11px;
  background: linear-gradient(#ddd, #ddd) 0 81px / 100% 1px no-repeat #f1f1f1;
}
.workspace {
  width: 111px;
  height: 62px;
  margin-top: 6px;
  gap: 8px;
  border: 2px solid #dedede;
  border-radius: 4px;
  font-weight: bold;
}
.tabs { display: flex; padding-left: 1px; }
.tabs a {
  width: 47px;
  height: 19px;
  border-bottom: 3px solid #1b8cc6;
  color: #1b8cc6;
  text-align: center;
  text-decoration: none;
}
.groups { display: flex; margin-top: 4px; }
.group { padding: 0 9px 0 11px; border-right: 2px solid #dedede; height: 51px; }
.group:first-child { padding-left: 0; }
.group:last-child { border: 0; padding-left: 13px; }
.icons { display: flex; gap: 11px; }
.icons button { width: 32px; height: 32px; }
.menu { margin: 5px auto 0; padding-right: 6px; gap: 3px; white-space: nowrap; }
.group:last-child .menu { padding-right: 0; }

/* Canvas */
.viewport {
  position: relative;
  flex: 1;
  display: flex;
  overflow: hidden;
}
.scene { position: absolute; inset: 0; width: 100%; height: 100%; }
.face { font-size: 19px; fill: #858585; }
.front { font-size: 23px; }
.ax { font-size: 13px; }
.x { fill: #d85050; }
.y { fill: #5fc463; }
.z { fill: #5858cc; }

/* Browser panel */
.browser {
  position: relative;
  display: flex;
  flex-direction: column;
  width: 304px;
  padding: 4px 0 4px 4px;
}
.bar {
  display: flex;
  align-items: center;
  height: 25px;
  padding: 0 10px 0 5px;
  background: #f1f1f1;
  border: 1px solid #c4c4c4;
  color: #555;
}
.bar span { flex: 1; margin-left: 9px; }
.comments { margin-top: auto; padding-left: 15px; }
.treewrap { display: flex; margin-top: 5px; padding-left: 4px; }
.track { width: 6px; background: #a0a1a2; border-radius: 3px; }
.thumb { height: 40%; background: #787878; border: 1px solid #666; border-radius: 3px; }
.tree {
  display: flex;
  flex-direction: column;
  gap: 4px;
  margin: 0;
  padding: 0 0 0 7px;
  list-style: none;
}
.tree li { display: flex; align-items: center; gap: 7px; height: 20px; }
.l1 { padding-left: 18px; }
.l2 { padding-left: 36px; }
.tree .l3 { padding-left: 73px; }
.tg svg { width: 12px; height: 14px; }
.node {
  display: flex;
  align-items: center;
  gap: 9px;
  height: 20px;
  padding: 0 9px 0 3px;
  background: #f1f1f1;
  white-space: nowrap;
}
.node svg { width: 16px; height: 16px; }
.node span { margin-left: 5px; }
.node .gear { width: 13px; height: 14px; }
.pink { border-left: 5px solid #f8adb2; }
.yellow { border-left: 5px solid #fad27c; }
.cyan { border-left: 5px solid #68d6d9; }
.dim button { opacity: 0.35; }
.active { gap: 6px; padding-right: 6px; }
.sel {
  display: flex;
  align-items: center;
  gap: 9px;
  height: 16px;
  padding: 0 12px 0 3px;
  background: #8c8c8c;
  color: #fff;
  font-weight: bold;
}
.active input {
  appearance: none;
  width: 13px;
  height: 13px;
  margin: 0;
  border: 1px solid #222;
  border-radius: 50%;
  background: radial-gradient(circle, #222 0 2px, #f1f1f1 3px);
}

/* View controls, floating over the canvas */
.navbar {
  position: absolute;
  left: 50%;
  bottom: 6px;
  transform: translateX(-50%);
  display: flex;
  height: 24px;
  padding: 0 2px;
  background: #f1f1f1;
}
.navbar button { width: 26px; height: 24px; }
.navbar .drop { width: 32px; gap: 4px; }
.navbar .tight { width: 31px; gap: 2px; }
.navbar .on { background: #0d96d8; }
```
